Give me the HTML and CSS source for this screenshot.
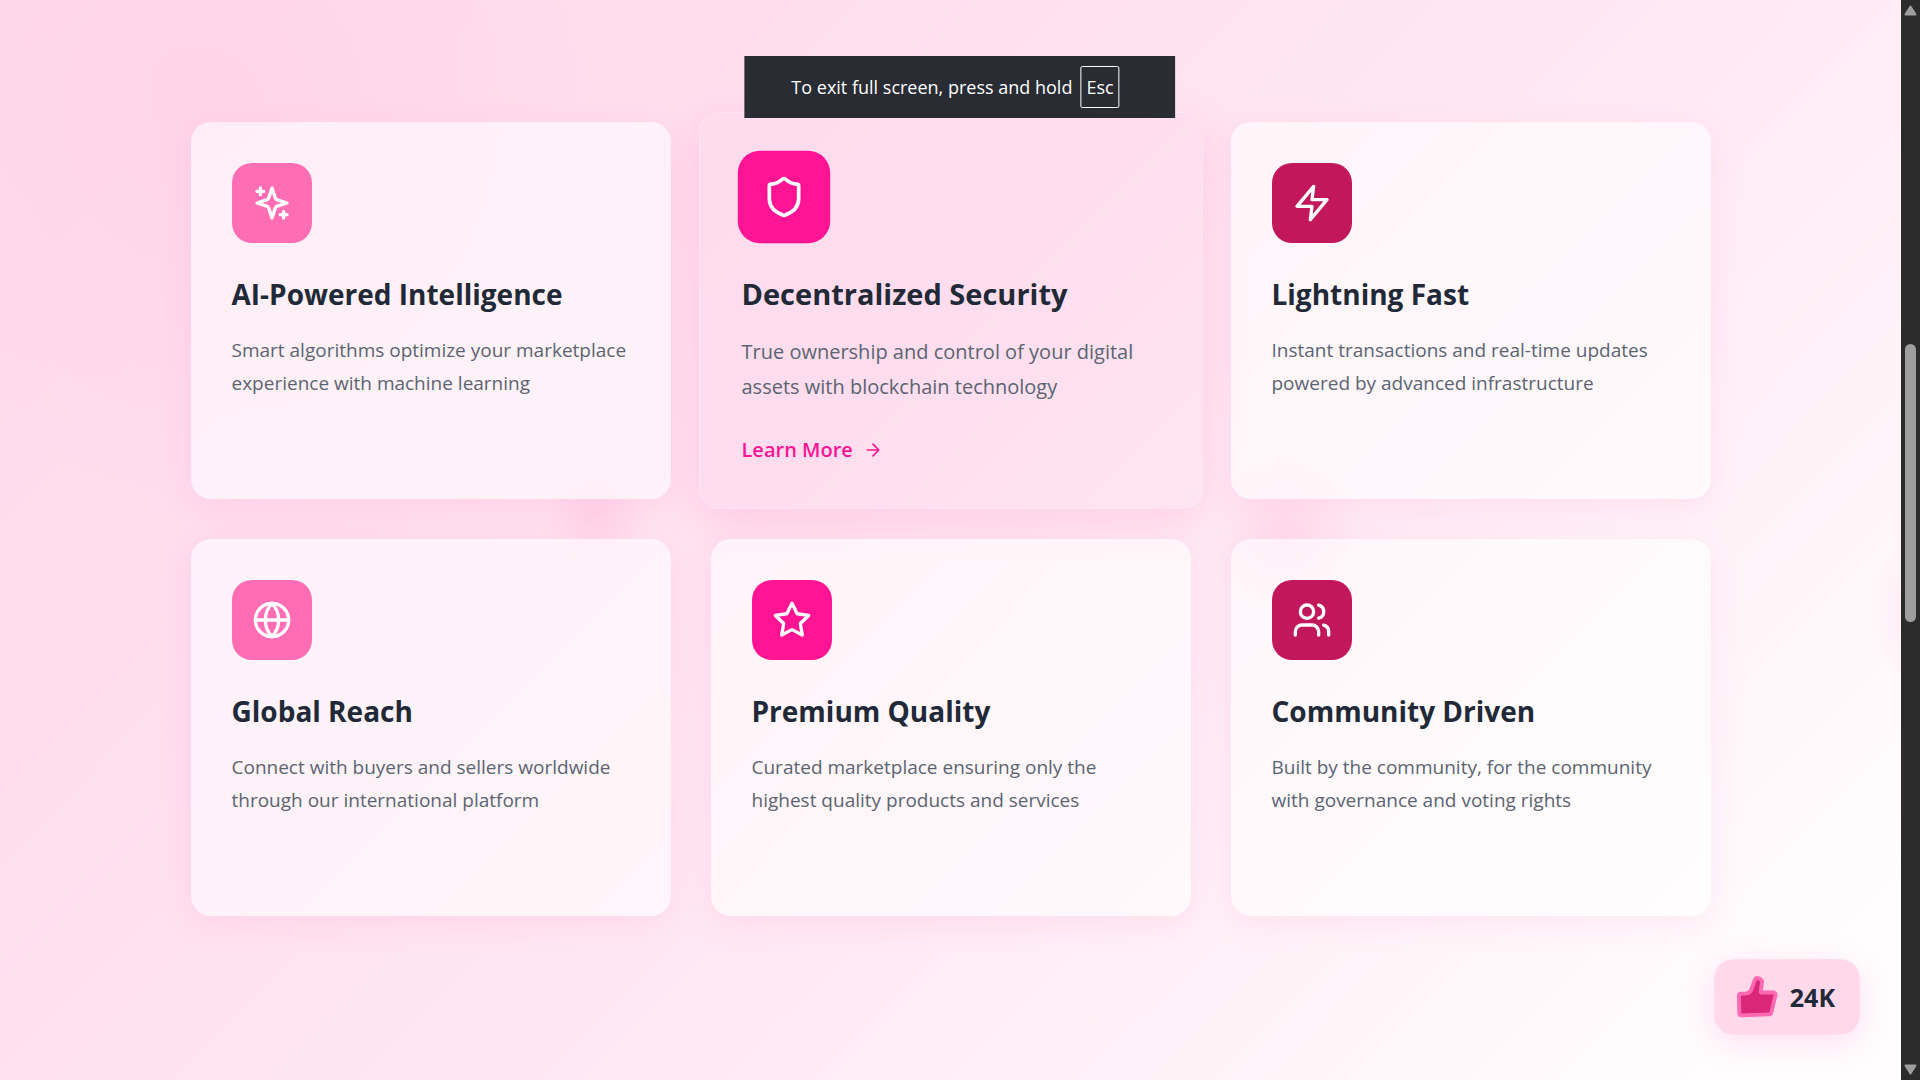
FILE: index.html
```html
<!DOCTYPE html>
<html lang="en">
<head>
    <meta charset="UTF-8">
    <meta name="viewport" content="width=device-width, initial-scale=1.0">
    <title>Features</title>
    <link rel="stylesheet" href="styles.css">
</head>
<body>
    <div class="page">
        <span class="blob blob-left"></span>
        <span class="blob blob-center"></span>
        <span class="blob blob-right"></span>

        <main class="features">
            <article class="card">
                <div class="icon light">
                    <svg viewBox="0 0 24 24"><path d="m12 3-1.912 5.813a2 2 0 0 1-1.275 1.275L3 12l5.813 1.912a2 2 0 0 1 1.275 1.275L12 21l1.912-5.813a2 2 0 0 1 1.275-1.275L21 12l-5.813-1.912a2 2 0 0 1-1.275-1.275L12 3Z"/><path d="M5 3v4M19 17v4M3 5h4M17 19h4"/></svg>
                </div>
                <h3>AI-Powered Intelligence</h3>
                <p>Smart algorithms optimize your marketplace experience with machine learning</p>
            </article>

            <article class="card active">
                <div class="icon hot">
                    <svg viewBox="0 0 24 24"><path d="M20 13c0 5-3.500 7.500-7.660 8.950a1 1 0 0 1-.670-.010C7.500 20.500 4 18 4 13V6a1 1 0 0 1 1-1c2 0 4.500-1.200 6.240-2.720a1.170 1.170 0 0 1 1.520 0C14.510 3.810 17 5 19 5a1 1 0 0 1 1 1z"/></svg>
                </div>
                <h3>Decentralized Security</h3>
                <p>True ownership and control of your digital assets with blockchain technology</p>
                <a class="learn-more" href="#">Learn More
                    <svg viewBox="0 0 24 24"><path d="M5 12h14M12 5l7 7-7 7"/></svg>
                </a>
            </article>

            <article class="card">
                <div class="icon dark">
                    <svg viewBox="0 0 24 24"><path d="M13 2 3 14h9l-1 8 10-12h-9l1-8z"/></svg>
                </div>
                <h3>Lightning Fast</h3>
                <p>Instant transactions and real-time updates powered by advanced infrastructure</p>
            </article>

            <article class="card">
                <div class="icon light">
                    <svg viewBox="0 0 24 24"><circle cx="12" cy="12" r="10"/><path d="M12 2a14.500 14.500 0 0 0 0 20 14.500 14.500 0 0 0 0-20M2 12h20"/></svg>
                </div>
                <h3>Global Reach</h3>
                <p>Connect with buyers and sellers worldwide through our international platform</p>
            </article>

            <article class="card">
                <div class="icon hot">
                    <svg viewBox="0 0 24 24"><path d="M12 2l3.090 6.260L22 9.270l-5 4.870 1.180 6.880L12 17.770l-6.180 3.250L7 14.140 2 9.270l6.910-1.010z"/></svg>
                </div>
                <h3>Premium Quality</h3>
                <p>Curated marketplace ensuring only the highest quality products and services</p>
            </article>

            <article class="card">
                <div class="icon dark">
                    <svg viewBox="0 0 24 24"><path d="M16 21v-2a4 4 0 0 0-4-4H6a4 4 0 0 0-4 4v2"/><circle cx="9" cy="7" r="4"/><path d="M22 21v-2a4 4 0 0 0-3-3.870M16 3.130a4 4 0 0 1 0 7.750"/></svg>
                </div>
                <h3>Community Driven</h3>
                <p>Built by the community, for the community with governance and voting rights</p>
            </article>
        </main>

        <button class="likes" type="button">
            <svg viewBox="138 138 128 128"><path d="M153 192L170 191Q180 189 184 181L195 151Q199 142 207 145Q219 149 217 159L213 188L251 188Q260 189 258 198L246 248Q244 255 236 255L156 258Q148 258 148 250L147 200Q147 192 153 192Z"/></svg>
            24K
        </button>
    </div>

    <div class="scrollbar">
        <svg class="arrow" viewBox="0 0 13 11"><path d="M6.500 1.500L11.500 9.500H1.500z"/></svg>
        <div class="track"><div class="thumb"></div></div>
        <svg class="arrow" viewBox="0 0 13 11"><path d="M6.500 9.500L11.500 1.500H1.500z"/></svg>
    </div>

    <div class="toast">To exit full screen, press and hold <kbd>Esc</kbd></div>
</body>
</html>
```
FILE: styles.css
```css
* {
    box-sizing: border-box;
}

body {
    display: flex;
    min-height: 100vh;
    margin: 0;
    font-family: "Segoe UI", "Open Sans", "Noto Sans", sans-serif;
    color: #1f2937;
}

.page {
    position: relative;
    flex: 1;
    overflow: hidden;
    padding: 122px 40px;
    background:
        radial-gradient(ellipse 400px 420px at 11% 10%, rgba(255, 182, 220, 0.2), transparent),
        linear-gradient(135deg, #ffdaeb 0%, #ffdeee 30%, #ffebf4 62%, #fffdfe 94%);
}

.blob {
    position: absolute;
    border-radius: 50%;
    background: radial-gradient(closest-side, rgba(255, 105, 180, 0.12), transparent);
}

.blob-left {
    width: 100px;
    height: 100px;
    left: 545px;
    top: 465px;
}

.blob-center {
    width: 160px;
    height: 160px;
    left: 1205px;
    top: 455px;
}

.blob-right {
    width: 120px;
    height: 160px;
    right: -90px;
    top: 535px;
}

.features {
    position: relative;
    display: grid;
    grid-template-columns: repeat(3, 1fr);
    grid-auto-rows: minmax(377px, auto);
    gap: 40px;
    max-width: 1520px;
    margin: 0 auto;
}

.card {
    padding: 41px;
    border-radius: 20px;
    background-color: rgba(255, 255, 255, 0.6);
    box-shadow: 0 8px 32px rgba(255, 105, 180, 0.12);
}

.icon {
    display: flex;
    align-items: center;
    justify-content: center;
    width: 80px;
    height: 80px;
    margin-bottom: 31px;
    border-radius: 20px;
}

.icon svg {
    width: 40px;
    height: 40px;
    fill: none;
    stroke: #fff;
    stroke-width: 2;
    stroke-linecap: round;
    stroke-linejoin: round;
}

.light {
    background-color: #ff6eb4;
}

.hot {
    background-color: #ff1493;
}

.dark {
    background-color: #c2185b;
}

.card h3 {
    margin: 0 0 20px;
    font-size: 28px;
    line-height: 40px;
}

.card p {
    margin: 0;
    font-size: 19px;
    line-height: 33px;
    color: #5b6472;
}

.card.active {
    margin: -10px -12px;
    padding: 42px;
    border: 1px solid rgba(255, 255, 255, 0.2);
    background: linear-gradient(135deg, #ffdcec, #ffddee 50%, #ffe5f1);
    box-shadow: 0 12px 40px rgba(255, 105, 180, 0.2);
}

.active .icon {
    width: 84px;
    height: 84px;
    margin-bottom: 33px;
    transform: scale(1.1);
}

.active h3 {
    margin-bottom: 18px;
    font-size: 29px;
    line-height: 44px;
}

.active p {
    font-size: 20px;
    line-height: 35px;
}

.learn-more {
    display: flex;
    align-items: center;
    gap: 10px;
    margin-top: 32px;
    font-size: 20px;
    font-weight: 600;
    line-height: 28px;
    color: #ff1493;
    text-decoration: none;
}

.learn-more svg {
    width: 20px;
    height: 20px;
    fill: none;
    stroke: currentColor;
    stroke-width: 2;
    stroke-linecap: round;
    stroke-linejoin: round;
}

.likes {
    position: absolute;
    right: 41px;
    bottom: 45px;
    display: flex;
    align-items: center;
    gap: 12px;
    padding: 16px 24px 16px 21px;
    border: 1px solid rgba(255, 255, 255, 0.2);
    border-radius: 20px;
    background-color: #ffd8ea;
    box-shadow: 0 8px 32px rgba(255, 105, 180, 0.2);
    font-family: inherit;
    font-size: 25px;
    font-weight: 700;
    color: #1f2937;
    cursor: pointer;
}

.likes svg {
    width: 42px;
    height: 42px;
    fill: #db2777;
    stroke: #ff69b4;
    stroke-width: 12;
    stroke-linejoin: round;
}

.scrollbar {
    display: flex;
    flex-direction: column;
    align-items: center;
    width: 19px;
    padding: 5px 0;
    background-color: #2c2c2c;
}

.arrow {
    width: 13px;
    height: 11px;
    fill: #9f9f9f;
    stroke: #9f9f9f;
    stroke-width: 2;
    stroke-linejoin: round;
}

.track {
    flex: 1;
    width: 11px;
    padding-top: 328px;
}

.thumb {
    height: 278px;
    border-radius: 6px;
    background-color: #9f9f9f;
}

.toast {
    position: fixed;
    top: 56px;
    left: 50%;
    display: flex;
    align-items: center;
    gap: 8px;
    padding: 10px 56px 10px 47px;
    background-color: #292c33;
    font-size: 18px;
    color: #fff;
    transform: translateX(-50%);
    white-space: nowrap;
}

.toast kbd {
    padding: 0 5px;
    border: 1px solid #fff;
    border-radius: 2px;
    font-family: inherit;
    line-height: 40px;
}
```
